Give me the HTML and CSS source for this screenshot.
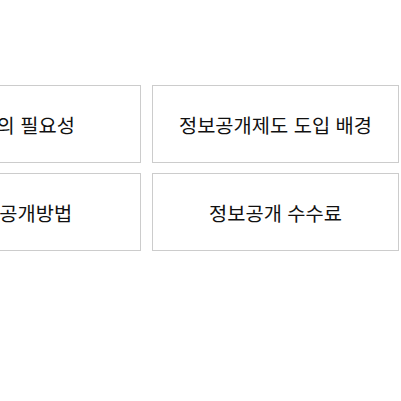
FILE: index.html
```html
<!DOCTYPE html>
<html lang="ko">
<head>
<meta charset="utf-8">
<title>정보공개</title>
<link rel="stylesheet" href="styles.css">
</head>
<body>
<div class="viewport">
  <ul class="menu-grid">
    <li class="menu-item"><a href="#">공개의 필요성</a></li>
    <li class="menu-item"><a href="#">정보공개제도 도입 배경</a></li>
    <li class="menu-item"><a href="#">정보공개방법</a></li>
    <li class="menu-item"><a href="#">정보공개 수수료</a></li>
  </ul>
</div>
</body>
</html>
```

FILE: styles.css
```css
html, body {
  margin: 0;
  padding: 0;
  background: #ffffff;
}

.viewport {
  width: 401px;
  height: 401px;
  overflow: hidden;
  padding-top: 85px;
  box-sizing: border-box;
}

.menu-grid {
  list-style: none;
  margin: 0 0 0 -106px;
  padding: 0;
  display: grid;
  grid-template-columns: 247px 247px;
  column-gap: 11px;
  row-gap: 10px;
}

.menu-item {
  height: 78px;
  box-sizing: border-box;
  border: 1px solid #cccccc;
  display: flex;
  align-items: center;
  justify-content: center;
}

.menu-item a {
  font-family: "Noto Sans CJK KR", "Noto Sans", sans-serif;
  font-size: 19.8px;
  color: #111111;
  text-decoration: none;
  white-space: nowrap;
}
```
